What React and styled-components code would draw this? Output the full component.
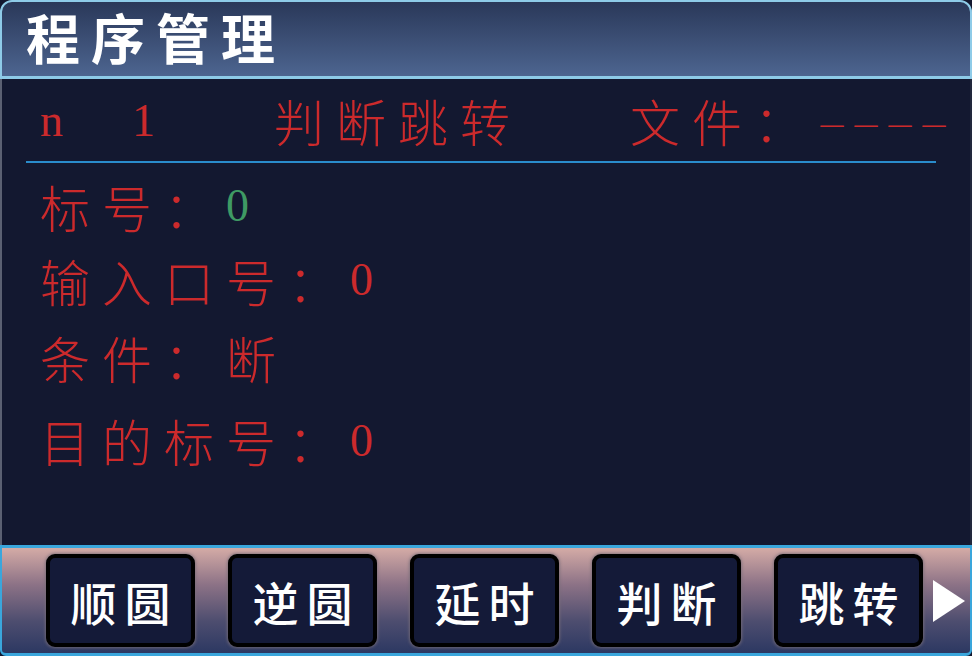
import styled, { createGlobalStyle } from "styled-components";

const GlobalStyle = createGlobalStyle`
  html, body {
    margin: 0;
    padding: 0;
    background: #131830;
  }
`;

const CJK = `"Noto Sans CJK SC", "Noto Sans", sans-serif`;

const Screen = styled.div`
  width: 972px;
  height: 656px;
  display: flex;
  flex-direction: column;
  overflow: hidden;
  font-family: ${CJK};
`;

const TitleBar = styled.div`
  height: 79px;
  box-sizing: border-box;
  border: 2px solid #8ecbe8;
  border-bottom-width: 3px;
  border-radius: 12px 12px 0 0;
  background: linear-gradient(#2a3859, #4d6590);
  display: flex;
  align-items: center;
  padding: 0 0 4px 24px;
`;

const Title = styled.h1`
  margin: 0;
  color: #ffffff;
  font-size: 54px;
  font-weight: 700;
  letter-spacing: 11px;
  line-height: 64px;
`;

const Body = styled.div`
  flex: 1;
  background: #131830;
  border-left: 2px solid #5b6072;
  border-right: 2px solid #22283c;
  padding: 0 0 0 38px;
`;

const Header = styled.div`
  display: flex;
  align-items: center;
  height: 82px;
  color: #cc2a2c;
  font-size: 50px;
  font-weight: 300;
  letter-spacing: 12px;
  white-space: nowrap;
`;

const Serif = styled.span`
  font-family: "Liberation Serif", serif;
  font-weight: 400;
  font-size: 46px;
  letter-spacing: 0;
  width: ${(p) => p.$w}px;
  flex: none;
`;

const Cell = styled.span`
  width: ${(p) => p.$w}px;
  flex: none;
`;

const Dashes = styled.span`
  font-size: 32px;
  letter-spacing: 2px;
  position: relative;
  top: -4px;
`;

const Divider = styled.div`
  height: 2px;
  background: #2a8ccc;
  width: 910px;
  margin-left: -14px;
`;

const Fields = styled.div`
  display: flex;
  flex-direction: column;
  padding-top: 6px;
`;

const Field = styled.div`
  height: ${(p) => p.$h}px;
  display: flex;
  align-items: center;
  color: #cc2a2c;
  font-size: 50px;
  font-weight: 300;
  letter-spacing: 12px;
  white-space: nowrap;
`;

const Num = styled.span`
  font-family: "Liberation Serif", serif;
  font-size: 46px;
  letter-spacing: 0;
  color: ${(p) => p.$color || "#cc2a2c"};
`;

const BottomBar = styled.div`
  height: 111px;
  box-sizing: border-box;
  border-top: 3px solid #3aa6dc;
  border-left: 2px solid #3aa6dc;
  border-right: 2px solid #3aa6dc;
  border-bottom: 3px solid #3aa6dc;
  border-radius: 0 0 6px 6px;
  background: linear-gradient(#d4aba6 0%, #8c7286 35%, #4d4d6f 70%, #2c3862 100%);
  display: flex;
  align-items: center;
  padding-left: 44px;
  gap: 33px;
`;

const Key = styled.button`
  width: 149px;
  height: 93px;
  box-sizing: border-box;
  border: 4px solid #000000;
  border-radius: 9px;
  background: #141a38;
  box-shadow: 0 0 3px 1px rgba(120, 110, 120, 0.8);
  color: #ffffff;
  font-family: ${CJK};
  font-size: 46px;
  font-weight: 500;
  letter-spacing: 8px;
  padding: 0 0 0 8px;
  display: flex;
  align-items: center;
  justify-content: center;
`;

const Arrow = styled.div`
  width: 0;
  height: 0;
  border-top: 21px solid transparent;
  border-bottom: 21px solid transparent;
  border-left: 32px solid #ffffff;
  margin-left: -23px;
`;

const keys = ["顺圆", "逆圆", "延时", "判断", "跳转"];

const fields = [
  { label: "标号：", value: "0", color: "#3f9a64", h: 73 },
  { label: "输入口号：", value: "0", h: 75 },
  { label: "条件：", text: "断", h: 80 },
  { label: "目的标号：", value: "0", h: 86 },
];

export default function App() {
  return (
    <>
      <GlobalStyle />
      <Screen>
        <TitleBar>
          <Title>程序管理</Title>
        </TitleBar>
        <Body>
          <Header>
            <Serif $w={92}>n</Serif>
            <Serif $w={142}>1</Serif>
            <Cell $w={356}>判断跳转</Cell>
            <span>
              文件：<Dashes>－－－－</Dashes>
            </span>
          </Header>
          <Divider />
          <Fields>
            {fields.map((f) => (
              <Field key={f.label} $h={f.h}>
                {f.label}
                {f.value && <Num $color={f.color}>{f.value}</Num>}
                {f.text}
              </Field>
            ))}
          </Fields>
        </Body>
        <BottomBar>
          {keys.map((k) => (
            <Key key={k}>{k}</Key>
          ))}
          <Arrow />
        </BottomBar>
      </Screen>
    </>
  );
}
